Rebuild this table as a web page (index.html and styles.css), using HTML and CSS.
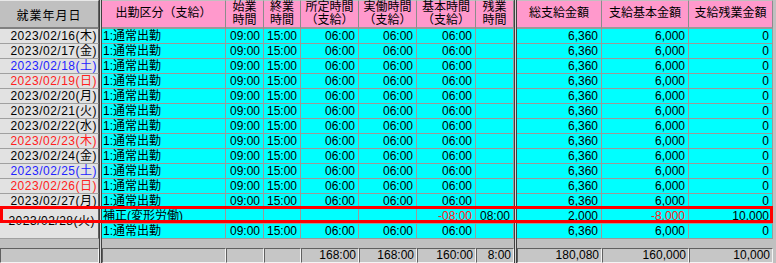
FILE: index.html
```html
<!DOCTYPE html>
<html lang="ja">
<head>
<meta charset="utf-8">
<link rel="stylesheet" href="styles.css">
</head>
<body>
<div class="sheet">
  <div class="divl"></div>
  <div class="divr"></div>
  <div class="pad"></div>

  <div class="hd-date">就業年月日</div>
  <div class="hd">出勤区分（支給）</div>
  <div class="hd">始業<br>時間</div>
  <div class="hd">終業<br>時間</div>
  <div class="hd">所定時間<br>（支給）</div>
  <div class="hd">実働時間<br>（支給）</div>
  <div class="hd">基本時間<br>（支給）</div>
  <div class="hd">残業<br>時間</div>
  <div class="hd">総支給金額</div>
  <div class="hd">支給基本金額</div>
  <div class="hd">支給残業金額</div>

  <div class="d">2023/02/16(木)</div><div class="c l">1:通常出勤</div><div class="c">09:00</div><div class="c">15:00</div><div class="c">06:00</div><div class="c">06:00</div><div class="c">06:00</div><div class="c"></div><div class="c">6,360</div><div class="c">6,000</div><div class="c">0</div>
  <div class="d">2023/02/17(金)</div><div class="c l">1:通常出勤</div><div class="c">09:00</div><div class="c">15:00</div><div class="c">06:00</div><div class="c">06:00</div><div class="c">06:00</div><div class="c"></div><div class="c">6,360</div><div class="c">6,000</div><div class="c">0</div>
  <div class="d sat">2023/02/18(土)</div><div class="c l">1:通常出勤</div><div class="c">09:00</div><div class="c">15:00</div><div class="c">06:00</div><div class="c">06:00</div><div class="c">06:00</div><div class="c"></div><div class="c">6,360</div><div class="c">6,000</div><div class="c">0</div>
  <div class="d hol">2023/02/19(日)</div><div class="c l">1:通常出勤</div><div class="c">09:00</div><div class="c">15:00</div><div class="c">06:00</div><div class="c">06:00</div><div class="c">06:00</div><div class="c"></div><div class="c">6,360</div><div class="c">6,000</div><div class="c">0</div>
  <div class="d">2023/02/20(月)</div><div class="c l">1:通常出勤</div><div class="c">09:00</div><div class="c">15:00</div><div class="c">06:00</div><div class="c">06:00</div><div class="c">06:00</div><div class="c"></div><div class="c">6,360</div><div class="c">6,000</div><div class="c">0</div>
  <div class="d">2023/02/21(火)</div><div class="c l">1:通常出勤</div><div class="c">09:00</div><div class="c">15:00</div><div class="c">06:00</div><div class="c">06:00</div><div class="c">06:00</div><div class="c"></div><div class="c">6,360</div><div class="c">6,000</div><div class="c">0</div>
  <div class="d">2023/02/22(水)</div><div class="c l">1:通常出勤</div><div class="c">09:00</div><div class="c">15:00</div><div class="c">06:00</div><div class="c">06:00</div><div class="c">06:00</div><div class="c"></div><div class="c">6,360</div><div class="c">6,000</div><div class="c">0</div>
  <div class="d hol">2023/02/23(木)</div><div class="c l">1:通常出勤</div><div class="c">09:00</div><div class="c">15:00</div><div class="c">06:00</div><div class="c">06:00</div><div class="c">06:00</div><div class="c"></div><div class="c">6,360</div><div class="c">6,000</div><div class="c">0</div>
  <div class="d">2023/02/24(金)</div><div class="c l">1:通常出勤</div><div class="c">09:00</div><div class="c">15:00</div><div class="c">06:00</div><div class="c">06:00</div><div class="c">06:00</div><div class="c"></div><div class="c">6,360</div><div class="c">6,000</div><div class="c">0</div>
  <div class="d sat">2023/02/25(土)</div><div class="c l">1:通常出勤</div><div class="c">09:00</div><div class="c">15:00</div><div class="c">06:00</div><div class="c">06:00</div><div class="c">06:00</div><div class="c"></div><div class="c">6,360</div><div class="c">6,000</div><div class="c">0</div>
  <div class="d hol">2023/02/26(日)</div><div class="c l">1:通常出勤</div><div class="c">09:00</div><div class="c">15:00</div><div class="c">06:00</div><div class="c">06:00</div><div class="c">06:00</div><div class="c"></div><div class="c">6,360</div><div class="c">6,000</div><div class="c">0</div>
  <div class="d">2023/02/27(月)</div><div class="c l">1:通常出勤</div><div class="c">09:00</div><div class="c">15:00</div><div class="c">06:00</div><div class="c">06:00</div><div class="c">06:00</div><div class="c"></div><div class="c">6,360</div><div class="c">6,000</div><div class="c">0</div>
  <div class="d span2">2023/02/28(火)</div><div class="c l">補正(変形労働)</div><div class="c"></div><div class="c"></div><div class="c"></div><div class="c"></div><div class="c neg">-08:00</div><div class="c">08:00</div><div class="c">2,000</div><div class="c neg">-8,000</div><div class="c">10,000</div>
  <div class="c l">1:通常出勤</div><div class="c">09:00</div><div class="c">15:00</div><div class="c">06:00</div><div class="c">06:00</div><div class="c">06:00</div><div class="c"></div><div class="c">6,360</div><div class="c">6,000</div><div class="c">0</div>

  <div class="t"></div><div class="t"></div><div class="t"></div><div class="t"></div><div class="t">168:00</div><div class="t">168:00</div><div class="t">160:00</div><div class="t">8:00</div><div class="t">180,080</div><div class="t">160,000</div><div class="t">10,000</div>

  <div class="mark"></div>
</div>
</body>
</html>
```

FILE: styles.css
```css
html, body {
  margin: 0;
  padding: 0;
  background: #c0c0c0;
}

.sheet {
  position: relative;
  width: 776px;
  height: 263px;
  display: grid;
  grid-template-columns: 99px 3px 124px 38px 37px 58px 58px 59px 38px 3px 85px 87px 84px 3px;
  grid-template-rows: 29px repeat(14, 15px) 9px 15px;
  background: #c0c0c0;
  font-family: "Liberation Sans", "Noto Sans CJK JP", sans-serif;
  font-size: 12px;
  color: #000;
  overflow: hidden;
}

.divl {
  grid-column: 2;
  grid-row: 1 / -1;
  border-left: 1px solid #404040;
  border-right: 1px solid #404040;
  background: #d4d4d4;
}

.divr {
  grid-column: 10;
  grid-row: 1 / -1;
  border-left: 1px solid #404040;
  border-right: 1px solid #404040;
  background: #d4d4d4;
}

.pad {
  grid-column: 14;
  grid-row: 1 / -1;
}

.hd-date {
  box-sizing: border-box;
  background: #c0c0c0;
  border-right: 1px solid #606060;
  border-bottom: 2px solid #808080;
  border-top: 1px solid #e8e8e8;
  display: flex;
  align-items: center;
  justify-content: center;
  letter-spacing: 1px;
}

.hd {
  box-sizing: border-box;
  background: #ff99cc;
  border-top: 1px solid #c0c0c0;
  border-right: 1px solid #8c8c8c;
  border-bottom: 2px solid #9a9a9a;
  display: flex;
  align-items: center;
  justify-content: center;
  text-align: center;
  line-height: 13.5px;
  white-space: nowrap;
}

.d {
  box-sizing: border-box;
  background: #e2e2e2;
  border-right: 1px solid #606060;
  border-bottom: 1px solid #a0a0a0;
  line-height: 14px;
  text-align: right;
  padding-right: 1px;
  letter-spacing: 0.5px;
  white-space: nowrap;
}

.d.span2 {
  grid-row: span 2;
  line-height: 25px;
  padding-right: 3px;
}

.sat { color: #2222ff; }
.hol { color: #ff2020; }

.c {
  box-sizing: border-box;
  background: #00ffff;
  border-right: 1px solid #9a9a9a;
  border-bottom: 1px solid #9a9a9a;
  line-height: 14px;
  text-align: right;
  padding-right: 3px;
  white-space: nowrap;
}

.c.l {
  text-align: left;
  padding-left: 1px;
  padding-right: 0;
}

.neg { color: #ff2020; }

.t {
  grid-row: 17;
  box-sizing: border-box;
  background: #c6c6c6;
  border-top: 1px solid #606060;
  border-left: 1px solid #606060;
  border-right: 1px solid #f4f4f4;
  border-bottom: 1px solid #f4f4f4;
  line-height: 13px;
  text-align: right;
  padding-right: 2px;
  white-space: nowrap;
}

.mark {
  position: absolute;
  left: 0;
  top: 206px;
  width: 773px;
  height: 17px;
  box-sizing: border-box;
  border: 3px solid #ff0000;
  pointer-events: none;
}
```
